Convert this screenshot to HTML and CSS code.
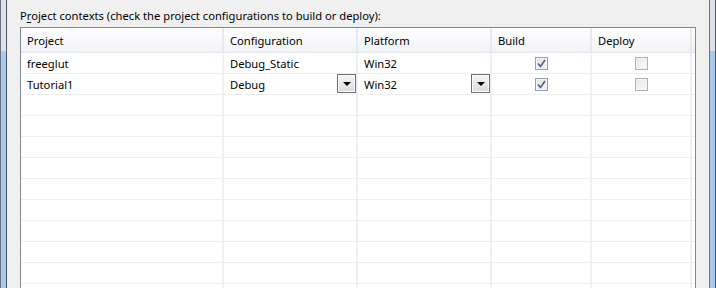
FILE: index.html
```html
<!DOCTYPE html>
<html lang="en">
<head>
  <meta charset="UTF-8">
  <title>Project contexts</title>
  <link rel="stylesheet" href="styles.css">
</head>
<body>
  <div class="frame">
    <div class="edge"></div>

    <div class="panel">
      <div class="caption">P<u>r</u>oject contexts (check the project configurations to build or deploy):</div>

      <div class="grid">
        <div class="hd">Project</div>
        <div class="hd">Configuration</div>
        <div class="hd">Platform</div>
        <div class="hd">Build</div>
        <div class="hd">Deploy</div>
        <div class="hd fill"></div>

        <!-- freeglut -->
        <div class="cell">freeglut</div>
        <div class="cell">Debug_Static</div>
        <div class="cell">Win32</div>
        <div class="cell center"><span class="check on"><svg width="9" height="9" viewBox="0 0 9 9"><path d="M1 4.5 L3.5 7.5 L8 1" fill="none" stroke="#4d6185" stroke-width="1.6"/></svg></span></div>
        <div class="cell center"><span class="check"></span></div>
        <div class="cell fill"></div>

        <!-- Tutorial1 -->
        <div class="cell">Tutorial1</div>
        <div class="cell combo">Debug<span class="drop"><i></i></span></div>
        <div class="cell combo">Win32<span class="drop"><i></i></span></div>
        <div class="cell center"><span class="check on"><svg width="9" height="9" viewBox="0 0 9 9"><path d="M1 4.5 L3.5 7.5 L8 1" fill="none" stroke="#4d6185" stroke-width="1.6"/></svg></span></div>
        <div class="cell center"><span class="check"></span></div>
        <div class="cell fill"></div>
      </div>
      <div class="empty" id="empty"></div>
    </div>

    <div class="edge"></div>
  </div>

  <script>
    // blank rows below the two projects
    var empty = document.getElementById('empty');
    for (var i = 0; i < 10; i++) {
      for (var c = 0; c < 6; c++) {
        var d = document.createElement('div');
        d.className = c === 5 ? 'cell fill' : 'cell';
        empty.appendChild(d);
      }
    }
  </script>
</body>
</html>
```

FILE: styles.css
```css
body { margin: 0; background: #f0f0f0; font-family: "Noto Sans", "Open Sans", sans-serif; font-size: 11.2px; color: #000; }
.frame { display: flex; height: 288px; overflow: hidden; }
.edge { width: 5px; border-left: 1px solid #6b7580; border-right: 1px solid #4a5563; background: linear-gradient(#dfe3e8 0, #dfe3e8 51px, #a9c9ef 51px, #a9c9ef 100%); }
.panel { flex: 1; padding: 8px 13px 0 13px; }
.caption { line-height: 16px; height: 16px; margin-bottom: 3px; }
.caption u { text-decoration: underline; text-underline-offset: 2px; }

.grid, .empty { display: grid; grid-template-columns: 203px 134px 134px 100px 100px 1fr; background: #fff; border-left: 1px solid #828790; border-right: 1px solid #828790; }
.grid { border-top: 1px solid #828790; }

.hd { height: 25px; line-height: 25px; padding-left: 6px; background: linear-gradient(#ffffff, #f1f3f6); border-right: 2px solid #e6e9ee; border-bottom: 1px solid #e2e4e8; box-sizing: border-box; }
.cell { height: 21px; line-height: 21px; padding-left: 6px; border-right: 2px solid #ecf1f9; border-bottom: 1px solid #eeeeee; box-sizing: border-box; }
.fill { padding: 0; border-right: none; }
.center { display: flex; justify-content: center; align-items: center; padding: 0; }
.combo { display: flex; justify-content: space-between; align-items: flex-start; }

.drop { width: 17px; height: 17px; border: 1px solid #707070; background: linear-gradient(#f4f4f4, #dcdcdc); box-shadow: inset 0 0 0 1px #fbfbfb; display: flex; align-items: center; justify-content: center; }
.drop i { width: 0; height: 0; border-left: 4px solid transparent; border-right: 4px solid transparent; border-top: 4px solid #000; }

.check { width: 11px; height: 11px; border: 1px solid #b1b1b1; background: linear-gradient(135deg, #e8e8e8, #fafafa); box-shadow: inset 0 0 0 1px #f4f4f4; display: flex; align-items: center; justify-content: center; }
.check.on { border-color: #9aa0a8; background: linear-gradient(135deg, #dde2ea, #f4f6f9); }
```
